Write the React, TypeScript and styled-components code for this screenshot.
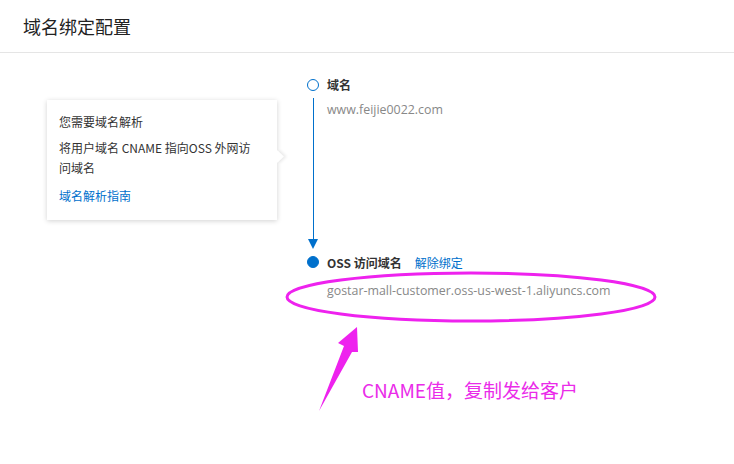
import React from "react";
import styled, { createGlobalStyle } from "styled-components";

const GlobalStyle = createGlobalStyle`
  html, body {
    margin: 0;
    padding: 0;
    background: #fff;
  }
  body {
    font-family: "Segoe UI", "Open Sans", "Noto Sans CJK SC", sans-serif;
    color: #333;
  }
`;

const Page = styled.div`
  position: relative;
  width: 734px;
  height: 464px;
  overflow: hidden;
`;

const Header = styled.div`
  height: 52px;
  display: flex;
  align-items: center;
  padding-left: 23px;
  border-bottom: 1px solid #e5e5e5;
  font-family: "Noto Sans CJK SC", sans-serif;
  font-size: 18px;
  color: #222;
`;

const Body = styled.div`
  display: flex;
  align-items: flex-start;
  padding-left: 47px;
`;

const Popover = styled.div`
  position: relative;
  margin-top: 47px;
  width: 230px;
  box-sizing: border-box;
  padding: 12px 17px 14px 12px;
  background: #fff;
  box-shadow: 0 1px 5px rgba(0, 0, 0, 0.18);
  font-family: "Noto Sans CJK SC", sans-serif;
  font-size: 12px;
  line-height: 20px;
  color: #333;

  &::after {
    content: "";
    position: absolute;
    right: -5px;
    top: 52px;
    width: 9px;
    height: 9px;
    background: #fff;
    transform: rotate(45deg);
    box-shadow: 2px -2px 3px rgba(0, 0, 0, 0.08);
  }
`;

const PopText = styled.p`
  margin: 0 0 6px;
`;

const PopLink = styled.a`
  display: block;
  margin-top: 8px;
  color: #0070cc;
  text-decoration: none;
`;

const Timeline = styled.div`
  margin-left: 29px;
  padding-top: 25px;
  display: flex;
  flex-direction: column;
`;

const Step = styled.div<{ $height?: number }>`
  display: grid;
  grid-template-columns: 14px 1fr;
  column-gap: 7px;
  min-height: ${(p) => (p.$height ? `${p.$height}px` : "auto")};
`;

const Rail = styled.div`
  display: flex;
  flex-direction: column;
  align-items: center;
`;

const Dot = styled.span<{ $filled?: boolean }>`
  box-sizing: border-box;
  width: 12px;
  height: 12px;
  border-radius: 50%;
  border: 1.6px solid #0070cc;
  background: ${(p) => (p.$filled ? "#0070cc" : "#fff")};
  margin-top: ${(p) => (p.$filled ? 0 : 1)}px;
`;

const Line = styled.span`
  flex: 1;
  width: 1px;
  margin-top: 7px;
  background: #0070cc;
`;

const ArrowHead = styled.span`
  width: 0;
  height: 0;
  border-left: 5px solid transparent;
  border-right: 5px solid transparent;
  border-top: 10px solid #0070cc;
  margin-bottom: 7px;
`;

const Content = styled.div`
  display: flex;
  flex-direction: column;
`;

const StepTitle = styled.div`
  display: flex;
  align-items: center;
  gap: 13px;
  font-family: "Noto Sans CJK SC", sans-serif;
  font-weight: 700;
  font-size: 12px;
  line-height: 13px;
  color: #333;
`;

const Unbind = styled.a`
  font-weight: 400;
  color: #0070cc;
  text-decoration: none;
`;

const StepValue = styled.div<{ $gap: number }>`
  margin-top: ${(p) => p.$gap}px;
  font-size: 12.4px;
  color: #888;
`;

const Overlay = styled.svg`
  position: absolute;
  left: 0;
  top: 0;
  pointer-events: none;
`;

const Note = styled.div`
  position: absolute;
  left: 362px;
  top: 376px;
  font-family: "Noto Sans CJK SC", sans-serif;
  font-size: 19px;
  color: #ea2be9;
`;

export default function App() {
  return (
    <Page>
      <GlobalStyle />
      <Header>域名绑定配置</Header>
      <Body>
        <Popover>
          <PopText>您需要域名解析</PopText>
          <PopText>将用户域名 CNAME 指向OSS 外网访问域名</PopText>
          <PopLink href="#">域名解析指南</PopLink>
        </Popover>
        <Timeline>
          <Step $height={178}>
            <Rail>
              <Dot />
              <Line />
              <ArrowHead />
            </Rail>
            <Content>
              <StepTitle>域名</StepTitle>
              <StepValue $gap={10}>www.feijie0022.com</StepValue>
            </Content>
          </Step>
          <Step>
            <Rail>
              <Dot $filled />
            </Rail>
            <Content>
              <StepTitle>
                OSS 访问域名 <Unbind href="#">解除绑定</Unbind>
              </StepTitle>
              <StepValue $gap={13}>gostar-mall-customer.oss-us-west-1.aliyuncs.com</StepValue>
            </Content>
          </Step>
        </Timeline>
      </Body>
      <Overlay width="734" height="464" viewBox="0 0 734 464">
        <ellipse cx="471" cy="297" rx="184" ry="24" fill="none" stroke="#ee22ee" strokeWidth="3" />
        <polygon points="357,327 338,343 344,346 319,411 352,352 358,352" fill="#ee22ee" />
      </Overlay>
      <Note>CNAME值，复制发给客户</Note>
    </Page>
  );
}
